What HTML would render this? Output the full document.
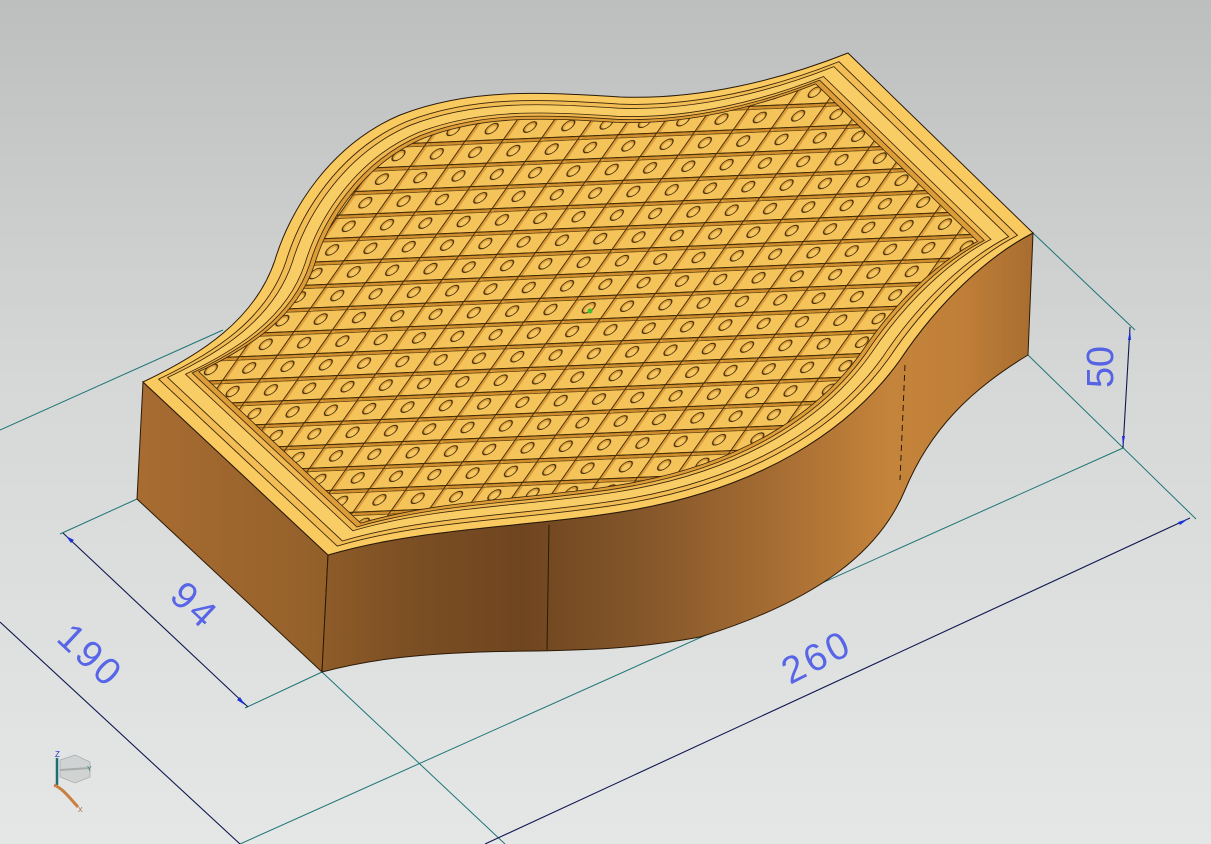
<!DOCTYPE html>
<html><head><meta charset="utf-8"><style>
html,body{margin:0;padding:0;width:1211px;height:844px;overflow:hidden}
svg{display:block}
</style></head><body>
<svg width="1211" height="844" viewBox="0 0 1211 844" xmlns="http://www.w3.org/2000/svg">
<defs>
<linearGradient id="bg" x1="0" y1="0" x2="0" y2="1">
<stop offset="0" stop-color="#bdbebe"/><stop offset="0.45" stop-color="#d6d8d8"/><stop offset="1" stop-color="#e5e7e7"/>
</linearGradient>
<linearGradient id="lf" x1="0" y1="0" x2="1" y2="0">
<stop offset="0" stop-color="#a86c31"/><stop offset="1" stop-color="#93602a"/>
</linearGradient>
<linearGradient id="cf" x1="322" y1="0" x2="1033" y2="0" gradientUnits="userSpaceOnUse">
<stop offset="0" stop-color="#8e5c28"/><stop offset="0.12" stop-color="#7c4f24"/>
<stop offset="0.28" stop-color="#6f4520"/><stop offset="0.45" stop-color="#84562a"/>
<stop offset="0.65" stop-color="#a86e33"/><stop offset="0.8" stop-color="#c5843b"/>
<stop offset="0.9" stop-color="#c07f38"/><stop offset="1" stop-color="#a86d30"/>
</linearGradient>
<pattern id="pt" patternUnits="userSpaceOnUse" width="38.3" height="23.6" patternTransform="matrix(1,-0.042,-0.703,1,222.4,379.8)">
<rect width="38.3" height="23.6" fill="#f4c35a"/>
<rect x="0" y="0" width="38.3" height="4" fill="#cf8d2c"/>
<rect x="0" y="0" width="4" height="23.6" fill="#dc9c38"/>
<line x1="0" y1="0.5" x2="38.3" y2="0.5" stroke="#3e2806" stroke-width="1.3"/>
<line x1="0.5" y1="0" x2="0.5" y2="23.6" stroke="#3e2806" stroke-width="1.3"/>
<line x1="0" y1="4" x2="38.3" y2="4" stroke="#5a3c0e" stroke-width="0.7"/>
<circle cx="19" cy="12.5" r="5.3" fill="#dc9f3c" stroke="#3e2806" stroke-width="1"/>
<circle cx="19.7" cy="13.3" r="3.6" fill="#f6c660"/>
</pattern>
<clipPath id="pc"><path transform="translate(590,300) scale(0.875) translate(-590,-300)" d="M143,382 L328,555 C420,528 520,528 620,512 C760,490 850,430 900,360 C940,300 990,255 1033,233 L848,53 C780,80 700,100 620,97 C540,92 470,88 400,115 C330,145 290,210 275,260 C255,320 200,355 143,382 Z"/></clipPath>
</defs>
<rect width="1211" height="844" fill="url(#bg)"/>

<g stroke="#1f7575" stroke-width="1" fill="none">
<line x1="0" y1="430" x2="223" y2="330"/>
<line x1="137" y1="499" x2="60" y2="534"/>
<line x1="322" y1="672" x2="245" y2="708"/>
<line x1="322" y1="672" x2="505" y2="844"/>
<line x1="1028" y1="355" x2="1196" y2="519"/>
<line x1="1033" y1="233" x2="1135" y2="330"/>
<line x1="1123" y1="448" x2="240" y2="844"/>
</g>
<g stroke="#101850" stroke-width="1.1" fill="none">
<line x1="63" y1="533" x2="248" y2="707"/>
<line x1="0" y1="622" x2="240" y2="844"/>
<line x1="1130" y1="327" x2="1123" y2="448"/>
<line x1="1190" y1="518" x2="485" y2="844"/>
</g>
<g fill="#1a30d8">
<polygon points="66,536 74,540 71,543"/>
<polygon points="245,705 237,700 240,697"/>
<polygon points="1130,330 1131,340 1128,340"/>
<polygon points="1123,446 1122,436 1125,436"/>
<polygon points="1188,519 1178,522 1180,525"/>
</g>
<g font-family="Liberation Sans, sans-serif" fill="#2a3ce8" fill-opacity="0.75" font-size="38">
<text x="0" y="0" transform="translate(168,598) rotate(43)" textLength="46">94</text>
<text x="0" y="0" transform="translate(55,640) rotate(43)" textLength="70">190</text>
<text x="0" y="0" transform="translate(790,685) rotate(-27)" textLength="70">260</text>
<text x="0" y="0" transform="translate(1113,388) rotate(-90)" textLength="42">50</text>
</g>

<path d="M143,382 L328,555 L322,672 L137,499 Z" fill="url(#lf)" stroke="#2a1a08" stroke-width="1"/>
<path d="M328,555 C420,528 520,528 620,512 C760,490 850,430 900,360 C940,300 990,255 1033,233 L1028,355 C970,390 930,430 905,490 C880,550 820,600 700,637 C620,652 560,650 480,652 C400,655 360,662 322,672 Z" fill="url(#cf)" stroke="#2a1a08" stroke-width="1"/>
<line x1="549" y1="525" x2="547" y2="650" stroke="#2a1a08" stroke-width="1"/>
<line x1="905" y1="365" x2="900" y2="480" stroke="#2a1a08" stroke-width="1" stroke-dasharray="6,4"/>

<path d="M143,382 L328,555 C420,528 520,528 620,512 C760,490 850,430 900,360 C940,300 990,255 1033,233 L848,53 C780,80 700,100 620,97 C540,92 470,88 400,115 C330,145 290,210 275,260 C255,320 200,355 143,382 Z" fill="#f8ca60" stroke="#2a1a08" stroke-width="1"/>
<g fill="none" stroke="#3a2508" stroke-width="0.9">
<path transform="translate(590,300) scale(0.965) translate(-590,-300)" d="M143,382 L328,555 C420,528 520,528 620,512 C760,490 850,430 900,360 C940,300 990,255 1033,233 L848,53 C780,80 700,100 620,97 C540,92 470,88 400,115 C330,145 290,210 275,260 C255,320 200,355 143,382 Z" fill="#f2bd55"/>
<path transform="translate(590,300) scale(0.945) translate(-590,-300)" d="M143,382 L328,555 C420,528 520,528 620,512 C760,490 850,430 900,360 C940,300 990,255 1033,233 L848,53 C780,80 700,100 620,97 C540,92 470,88 400,115 C330,145 290,210 275,260 C255,320 200,355 143,382 Z" fill="#f9cd66"/>
<path transform="translate(590,300) scale(0.905) translate(-590,-300)" d="M143,382 L328,555 C420,528 520,528 620,512 C760,490 850,430 900,360 C940,300 990,255 1033,233 L848,53 C780,80 700,100 620,97 C540,92 470,88 400,115 C330,145 290,210 275,260 C255,320 200,355 143,382 Z" fill="#f0b850"/>
<path transform="translate(590,300) scale(0.89) translate(-590,-300)" d="M143,382 L328,555 C420,528 520,528 620,512 C760,490 850,430 900,360 C940,300 990,255 1033,233 L848,53 C780,80 700,100 620,97 C540,92 470,88 400,115 C330,145 290,210 275,260 C255,320 200,355 143,382 Z" fill="#dc9c38"/>
</g>
<rect x="0" y="0" width="1211" height="844" fill="url(#pt)" clip-path="url(#pc)"/>
<path transform="translate(590,300) scale(0.875) translate(-590,-300)" d="M143,382 L328,555 C420,528 520,528 620,512 C760,490 850,430 900,360 C940,300 990,255 1033,233 L848,53 C780,80 700,100 620,97 C540,92 470,88 400,115 C330,145 290,210 275,260 C255,320 200,355 143,382 Z" fill="none" stroke="#3a2508" stroke-width="0.9"/>
<circle cx="590" cy="311" r="2.5" fill="#3ec030"/>

<g>
<path d="M60,760 L75,755 L90,762 L90,777 L75,783 L60,777 Z" fill="#c9cccc" fill-opacity="0.7" stroke="#a9adad" stroke-width="0.8"/>
<line x1="60" y1="770" x2="90" y2="768" stroke="#a9adad" stroke-width="2"/>
<line x1="57" y1="785" x2="57" y2="758" stroke="#1d6e6e" stroke-width="2.5"/>
<text x="55" y="757" font-family="Liberation Sans, sans-serif" font-size="8" fill="#2030c0">Z</text>
<text x="87" y="771" font-family="Liberation Sans, sans-serif" font-size="7" fill="#2a7a6a">Y</text>
<path d="M54,785 C62,788 68,796 78,807" stroke="#c88040" stroke-width="3" fill="none"/>
<text x="78" y="812" font-family="Liberation Sans, sans-serif" font-size="7" fill="#a86030">X</text>
</g>
</svg>
</body></html>
